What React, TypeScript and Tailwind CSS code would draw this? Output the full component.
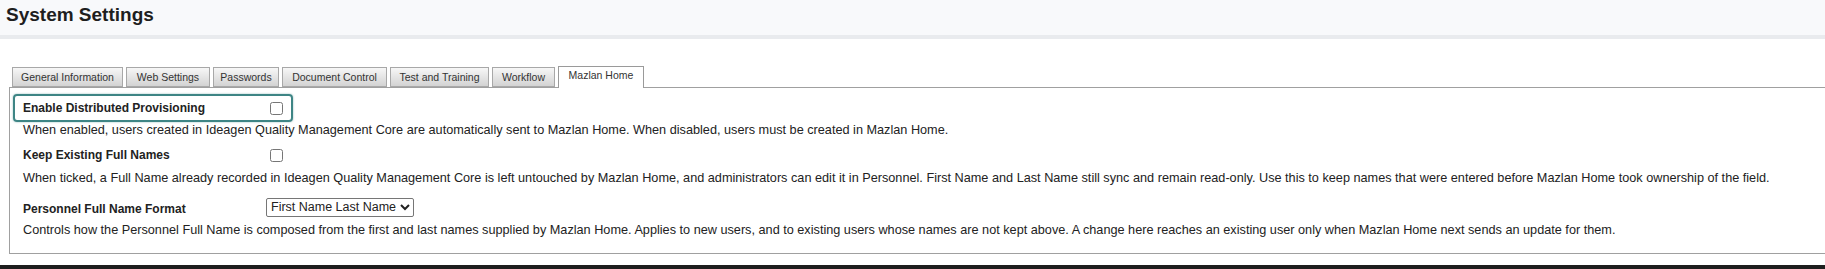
import { useState } from "react";

const tabs = [
  { name: "General Information", w: "w-[111px]" },
  { name: "Web Settings", w: "w-[84px]" },
  { name: "Passwords", w: "w-[66px]" },
  { name: "Document Control", w: "w-[105px]" },
  { name: "Test and Training", w: "w-[99px]" },
  { name: "Workflow", w: "w-[63px]" },
  { name: "Mazlan Home", w: "w-[86px]" },
];

export default function App() {
  const [active, setActive] = useState("Mazlan Home");
  const [provisioning, setProvisioning] = useState(false);
  const [keepNames, setKeepNames] = useState(false);
  const [format, setFormat] = useState("first-last");

  return (
    <div className="w-[1825px] h-[269px] bg-white text-[#222] font-['Liberation_Sans',Arial,sans-serif] flex flex-col overflow-hidden">
      <div className="h-[39px] bg-[#f8f9fb] border-b-4 border-[#e9ebee] px-[6px] pt-[2px]">
        <h1 className="text-[19px] leading-[26px] font-bold text-[#1e1e1e]">System Settings</h1>
      </div>

      <div className="pt-[26px] pl-[9px]">
        <div className="flex items-end gap-[3px] pl-[3px] h-[22px]">
          {tabs.map((t) =>
            t.name === active ? (
              <button
                key={t.name}
                onClick={() => setActive(t.name)}
                className={`${t.w} h-[22px] -mb-px bg-white border border-b-0 border-[#9a9a9a] text-[10.5px] text-[#333] pb-[3px] relative z-10`}
              >
                {t.name}
              </button>
            ) : (
              <button
                key={t.name}
                onClick={() => setActive(t.name)}
                className={`${t.w} h-[20px] bg-linear-to-b from-[#f7f7f7] to-[#d3d3d3] border border-[#a8a8a8] text-[10.5px] text-[#333] leading-[18px]`}
              >
                {t.name}
              </button>
            )
          )}
        </div>

        <div className="border-t border-l border-b border-[#a0a0a0] pb-[15px] text-[12.7px] text-[#222]">
          <label className="mt-[6px] ml-[3px] w-[280px] h-[28px] border-2 border-[#3e8585] rounded-[4px] shadow-[0_0_2px_rgba(62,133,133,0.6)] flex items-center pl-[8px]">
            <span className="w-[243px] font-bold text-[12px]">Enable Distributed Provisioning</span>
            <input
              type="checkbox"
              checked={provisioning}
              onChange={(e) => setProvisioning(e.target.checked)}
              className="w-[13px] h-[13px] ml-[4px]"
            />
          </label>
          <p className="pl-[13px] leading-[16px]">
            When enabled, users created in Ideagen Quality Management Core are automatically sent to Mazlan Home. When disabled, users must be created in Mazlan Home.
          </p>

          <label className="mt-[9px] h-[16px] flex items-center pl-[13px]">
            <span className="w-[243px] font-bold text-[12px]">Keep Existing Full Names</span>
            <input
              type="checkbox"
              checked={keepNames}
              onChange={(e) => setKeepNames(e.target.checked)}
              className="w-[13px] h-[13px] ml-[4px]"
            />
          </label>
          <p className="mt-[7px] pl-[13px] leading-[16px]">
            When ticked, a Full Name already recorded in Ideagen Quality Management Core is left untouched by Mazlan Home, and administrators can edit it in Personnel. First Name and Last Name still sync and remain read-only. Use this to keep names that were entered before Mazlan Home took ownership of the field.
          </p>

          <div className="mt-[12px] h-[18px] flex items-center pl-[13px]">
            <span className="w-[243px] font-bold text-[12px] pt-[4px]">Personnel Full Name Format</span>
            <select
              value={format}
              onChange={(e) => setFormat(e.target.value)}
              className="w-[148px] h-[19px] border border-[#767676] rounded-[2px] text-[12.5px] px-0 bg-white appearance-auto"
            >
              <option value="first-last">First Name Last Name</option>
              <option value="last-first">Last Name, First Name</option>
            </select>
          </div>
          <p className="mt-[6px] pl-[13px] leading-[16px]">
            Controls how the Personnel Full Name is composed from the first and last names supplied by Mazlan Home. Applies to new users, and to existing users whose names are not kept above. A change here reaches an existing user only when Mazlan Home next sends an update for them.
          </p>
        </div>
      </div>

      <div className="mt-[11px] flex-1 bg-[#1e1e1e]" />
    </div>
  );
}
